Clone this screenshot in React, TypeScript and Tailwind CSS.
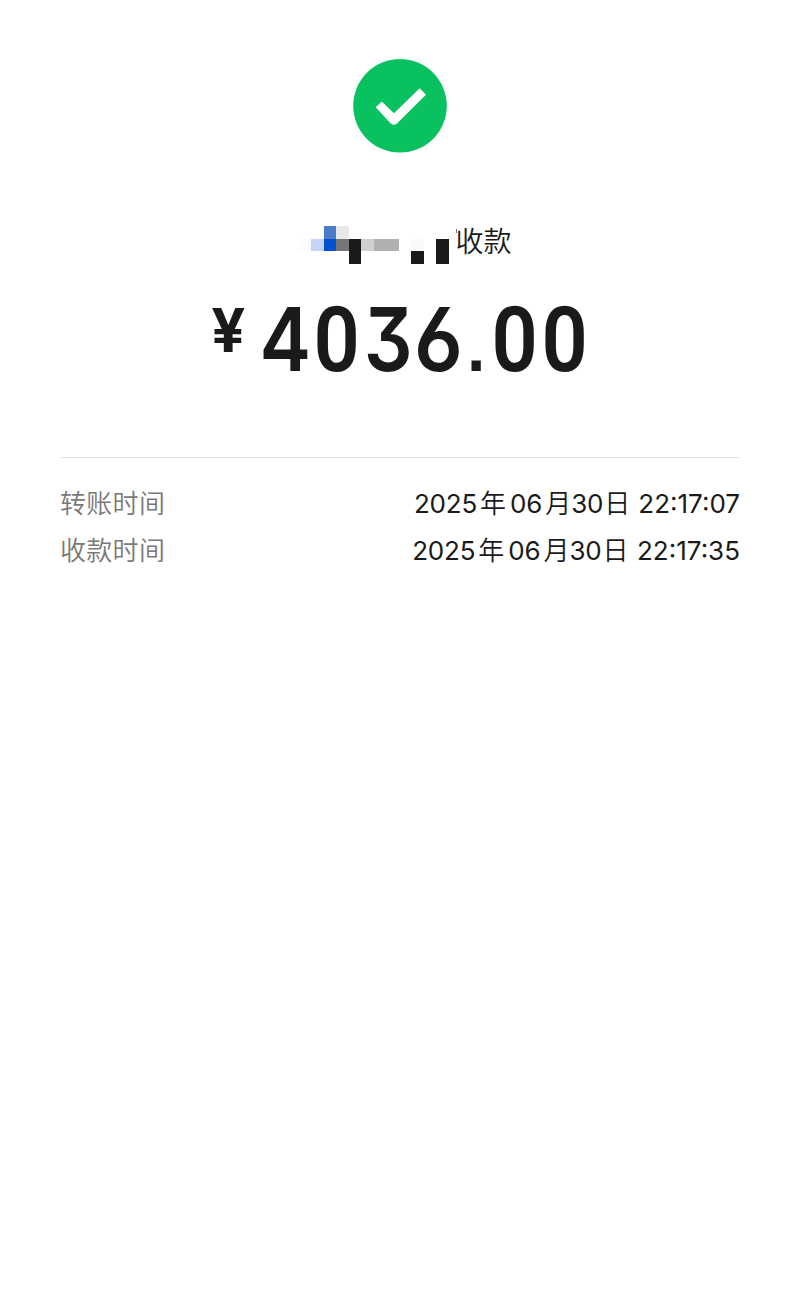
const mosaic: string[][] = [
  ['', '', 'bg-[#4a7dc6]', 'bg-[#e8e8e8]', '', '', '', '', '', '', '', ''],
  ['bg-[#fcfcfe]', 'bg-[#c3d5f4]', 'bg-[#0052d0]', 'bg-[#777777]', 'bg-[#1a1a1a]', 'bg-[#d0d0d0]', 'bg-[#b0b0b0]', 'bg-[#b0b0b0]', '', 'bg-[#fafafa]', '', 'bg-[#1a1a1a]'],
  ['', '', '', '', 'bg-[#1a1a1a]', '', '', '', '', 'bg-[#1a1a1a]', '', 'bg-[#1a1a1a]'],
];

const zero = "scale-x-[0.9] font-['Roboto'] text-[90px]";

const amount: { char: string; cell: string; glyph: string }[] = [
  { char: '4', cell: 'w-[51px]', glyph: 'scale-x-[0.88]' },
  { char: '0', cell: 'w-[52px]', glyph: zero },
  { char: '3', cell: 'w-[50px]', glyph: 'scale-x-[0.87]' },
  { char: '6', cell: 'w-[51px]', glyph: 'scale-x-[0.92]' },
  { char: '.', cell: 'w-[25px]', glyph: "scale-x-[0.75] scale-y-[0.8] origin-[50%_75px] font-['Liberation_Sans'] font-bold" },
  { char: '0', cell: 'w-[51px]', glyph: zero },
  { char: '0', cell: 'w-[50px]', glyph: zero },
];

function SuccessIcon() {
  return (
    <svg width="94" height="94" viewBox="0 0 94 94" className="mt-[59px] ml-[353px] block">
      <circle cx="47" cy="46.8" r="46.8" fill="#0ac160" />
      <path d="M22.7 48.3L28.7 42.5L41 54.3L66.7 29.3L73 35.7L44 64.4Q41 67 37.7 64.4Z" fill="#fff" />
    </svg>
  );
}

function TimeRow({ label, time, gap }: { label: string; time: string; gap: string }) {
  return (
    <div className="flex h-[47px] items-center justify-between text-[26px] whitespace-nowrap">
      <span className="font-[350] tracking-[0.3px] text-[#787878]">{label}</span>
      <span className="flex">
        <span className="tracking-[-0.2px]">2025</span>
        <span className="mr-[4px] ml-[3px] font-[350]">年</span>
        <span className="tracking-[-0.2px]">06</span>
        <span className="ml-[3px] font-[350]">月</span>
        <span className="tracking-[-0.2px]">30</span>
        <span className="ml-px font-[350]">日</span>
        <span className={gap}>{time}</span>
      </span>
    </div>
  );
}

export default function App() {
  return (
    <main className="flex h-[1308px] w-[800px] flex-col bg-white font-['Inter','Noto_Sans_CJK_SC',sans-serif] text-[#1a1a1a]">
      <SuccessIcon />
      <div className="mt-[67px] ml-[299px] flex h-[44px]">
        <div className="mt-[6px] grid h-[37.5px] w-[149.6px] grid-cols-12 grid-rows-3">
          {mosaic.flat().map((color, i) => (
            <span key={i} className={color} />
          ))}
        </div>
        <span className="mt-[9px] ml-[7px] h-[4px] w-px bg-[#777777]" />
        <span className="-ml-px font-['Noto_Sans_CJK_SC',sans-serif] text-[28px] leading-[41px] font-[350]">收款</span>
      </div>
      <div className="mt-[30px] ml-[208px] flex h-[92px]">
        <span className="flex h-[60px] w-[40px] justify-center text-[61px] leading-[73px] font-bold">
          <span className="block scale-x-[0.98]">¥</span>
        </span>
        <div className="mt-px ml-[12px] flex items-baseline text-[88px] leading-[89px] font-semibold [font-feature-settings:'cv03','cv09']">
          {amount.map(({ char, cell, glyph }, i) => (
            <span key={i} className={`flex justify-center ${cell}`}>
              <span className={`block leading-[89px] ${glyph}`}>{char}</span>
            </span>
          ))}
        </div>
      </div>
      <div className="mx-[60px] mt-[71px] border-t border-[#e4e4e4] pt-[22px]">
        <TimeRow label="转账时间" time="22:17:07" gap="ml-[8px]" />
        <TimeRow label="收款时间" time="22:17:35" gap="ml-[8.5px]" />
      </div>
    </main>
  );
}
